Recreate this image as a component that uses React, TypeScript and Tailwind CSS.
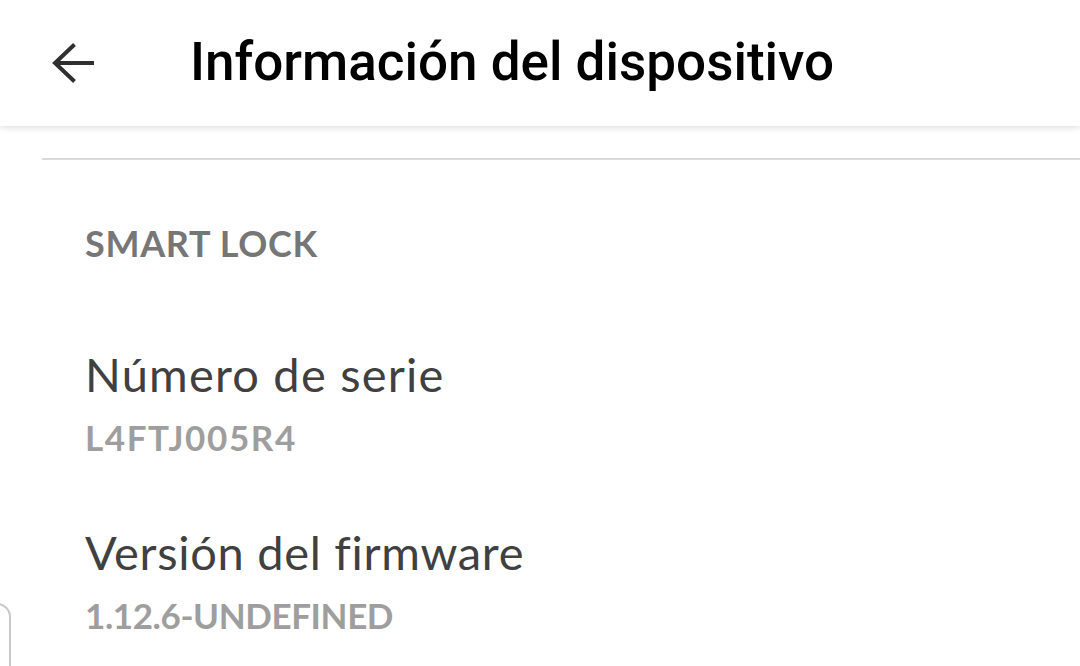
import React from "react";

const rows = [
  { label: "Número de serie", value: "L4FTJ005R4", labelCls: "tracking-[1.2px]", valueCls: "tracking-[1.6px]" },
  { label: "Versión del firmware", value: "1.12.6-UNDEFINED", labelCls: "tracking-[0.7px]", valueCls: "tracking-[-0.4px]" },
];

export default function App() {
  return (
    <div className="relative w-[1080px] h-[666px] overflow-hidden bg-white font-['Lato',sans-serif]">
      {/* Header */}
      <header className="h-[126px] flex items-center bg-white shadow-[0_2px_6px_rgba(0,0,0,0.12)] relative z-10">
        <button className="ml-[52px] w-[42px] h-[42px] flex items-center justify-center" aria-label="Volver">
          <svg width="42" height="42" viewBox="0 0 42 42" fill="none">
            <path d="M42 21H4" stroke="#2f2f2f" strokeWidth="4" />
            <path d="M22.5 2.5L3 21l19.5 18.5" stroke="#2f2f2f" strokeWidth="4" />
          </svg>
        </button>
        <h1 className="ml-[96px] text-[53px] font-medium text-black font-['Roboto',sans-serif]">
          Información del dispositivo
        </h1>
      </header>

      <div className="ml-[42px] mt-[32px] border-t-2 border-[#d9d9d9]" />

      <main className="pl-[85px] pt-[65px]">
        <h2 className="text-[36px] font-bold text-[#767676] leading-none tracking-[0.7px]">SMART LOCK</h2>

        <div className="mt-[90px] flex flex-col gap-[74px]">
          {rows.map((r) => (
            <div key={r.label} className="flex flex-col">
              <span className={`text-[47px] text-[#404040] leading-none ${r.labelCls}`}>{r.label}</span>
              <span className={`mt-[22px] text-[35px] font-bold text-[#9e9e9e] leading-none ${r.valueCls}`}>{r.value}</span>
            </div>
          ))}
        </div>
      </main>

      {/* edge of a card peeking in from the left */}
      <div className="absolute left-[-40px] top-[603px] w-[51px] h-[120px] border-2 border-[#c8c8c8] rounded-[14px]" />
    </div>
  );
}
